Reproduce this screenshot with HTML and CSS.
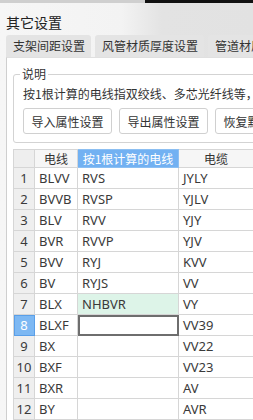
FILE: index.html
```html
<!DOCTYPE html>
<html>
<head>
	<meta charset="utf-8">
	<title>其它设置</title>
	<link rel="stylesheet" href="styles.css">
</head>
<body>
	<div class="window">
		<!-- 顶部条 -->
		<div class="topbar">
			<div class="topbar-left"></div>
			<div class="topbar-right"></div>
		</div>
		<div class="title">其它设置</div>
		<!-- 选项卡 -->
		<div class="tabs">
			<div class="tab">支架间距设置</div>
			<div class="tab">风管材质厚度设置</div>
			<div class="tab">管道材质设置</div>
		</div>
		<div class="panel">
			<fieldset class="note">
				<legend>说明</legend>
				<p class="note-text">按1根计算的电线指双绞线、多芯光纤线等，</p>
				<div class="btns">
					<button type="button" class="btn">导入属性设置</button>
					<button type="button" class="btn">导出属性设置</button>
					<button type="button" class="btn">恢复默认设置</button>
				</div>
			</fieldset>
			<!-- 表格 -->
			<table class="grid">
				<colgroup>
					<col class="c-num">
					<col class="c-wire">
					<col class="c-one">
					<col class="c-cable">
				</colgroup>
				<thead>
					<tr>
						<th class="corner"></th>
						<th>电线</th>
						<th class="sel">按1根计算的电线</th>
						<th>电缆</th>
					</tr>
				</thead>
				<tbody>
					<tr><td class="num">1</td><td>BLVV</td><td>RVS</td><td>JYLY</td></tr>
					<tr><td class="num">2</td><td>BVVB</td><td>RVSP</td><td>YJLV</td></tr>
					<tr><td class="num">3</td><td>BLV</td><td>RVV</td><td>YJY</td></tr>
					<tr><td class="num">4</td><td>BVR</td><td>RVVP</td><td>YJV</td></tr>
					<tr><td class="num">5</td><td>BVV</td><td>RYJ</td><td>KVV</td></tr>
					<tr><td class="num">6</td><td>BV</td><td>RYJS</td><td>VV</td></tr>
					<tr><td class="num">7</td><td>BLX</td><td class="mint">NHBVR</td><td>VY</td></tr>
					<tr><td class="num cur">8</td><td>BLXF</td><td class="edit"></td><td>VV39</td></tr>
					<tr><td class="num">9</td><td>BX</td><td></td><td>VV22</td></tr>
					<tr><td class="num">10</td><td>BXF</td><td></td><td>VV23</td></tr>
					<tr><td class="num">11</td><td>BXR</td><td></td><td>AV</td></tr>
					<tr><td class="num">12</td><td>BY</td><td></td><td>AVR</td></tr>
				</tbody>
			</table>
		</div>
	</div>
</body>
</html>
```

FILE: styles.css
```css
*{
	margin: 0;
	padding: 0;
	box-sizing: border-box;
}
body{
	font-family: "Noto Sans", "Noto Sans CJK SC", sans-serif;
	color: #333333;
}
.window{
	width: 253px;
	height: 420px;
	overflow: hidden;
	display: flex;
	flex-direction: column;
	background: linear-gradient(90deg, #f6f6f6 0, #f3f3f3 48%, #e3e3e3 64%, #e2e2e2 100%);
}

/* 顶部条 */
.topbar{
	display: flex;
	height: 3px;
	flex: none;
}
.topbar-left{
	width: 145px;
	background: #cfcfcf;
}
.topbar-right{
	flex: 1;
	background: #111111;
}

.title{
	flex: none;
	height: 32px;
	padding: 10px 0 0 6px;
	font-family: "Noto Sans CJK SC", sans-serif;
	font-size: 14px;
	line-height: 18px;
	color: #222222;
}

/* 选项卡 */
.tabs{
	flex: none;
	display: flex;
	gap: 4px;
	padding-left: 6px;
	white-space: nowrap;
}
.tab{
	flex: none;
	height: 22px;
	padding: 0 6px 0 7px;
	background: #e4e4e4;
	border-radius: 3px 3px 0 0;
	font-family: "Noto Sans CJK SC", sans-serif;
	font-size: 12px;
	line-height: 22px;
	color: #333333;
}

.panel{
	flex: 1;
	margin-left: 6px;
	padding-left: 6px;
	background: #ffffff;
	border-left: 1px solid #cfcfcf;
	border-top: 1px solid #e0e0e0;
	width: 300px;
}

/* 说明 */
.note{
	margin-top: 9px;
	width: 300px;
	border: 1px solid #d3d3d3;
	border-radius: 3px;
	padding: 5px 0 8px 9px;
	font-family: "Noto Sans CJK SC", sans-serif;
	font-size: 12px;
}
.note legend{
	margin-left: -3px;
	padding: 0 2px;
	line-height: 14px;
	color: #333333;
}
.note-text{
	line-height: 16px;
	white-space: nowrap;
}
.btns{
	display: flex;
	gap: 7px;
	margin-top: 6px;
}
.btn{
	flex: none;
	width: 89px;
	height: 26px;
	background: #ffffff;
	border: 1px solid #d0d0d0;
	border-radius: 3px;
	font-family: "Noto Sans CJK SC", sans-serif;
	font-size: 12px;
	color: #333333;
	white-space: nowrap;
	overflow: hidden;
}

/* 表格 */
.grid{
	margin-top: 6px;
	border-collapse: collapse;
	table-layout: fixed;
	width: 240px;
	font-size: 13px;
	color: #3a3a3a;
}
.c-num{ width: 21px; }
.c-wire{ width: 43px; }
.c-one{ width: 101px; }
.c-cable{ width: 75px; }
.grid th,
.grid td{
	border: 1px solid #d6d6d6;
	white-space: nowrap;
	overflow: hidden;
}
.grid th{
	height: 18px;
	font-family: "Noto Sans CJK SC", sans-serif;
	font-size: 12px;
	font-weight: normal;
	line-height: 16px;
	background: #f6f6f6;
	color: #333333;
}
.grid th.corner{
	background: #eeeeee;
}
.grid th.sel{
	background: #72b1f2;
	color: #ffffff;
	border-color: #8cbff2;
}
.grid td{
	height: 21px;
	padding-left: 4px;
	line-height: 19px;
}
.grid td.num{
	padding: 0;
	text-align: center;
	background: #efefef;
}
.grid td.cur{
	background: #7db8f3;
	color: #ffffff;
	outline: 1px solid #5a9fe8;
	outline-offset: -1px;
}
.grid td.mint{
	background: #ddf4e8;
}
.grid td.edit{
	outline: 2px solid #6e6e6e;
	outline-offset: -2px;
}
```
